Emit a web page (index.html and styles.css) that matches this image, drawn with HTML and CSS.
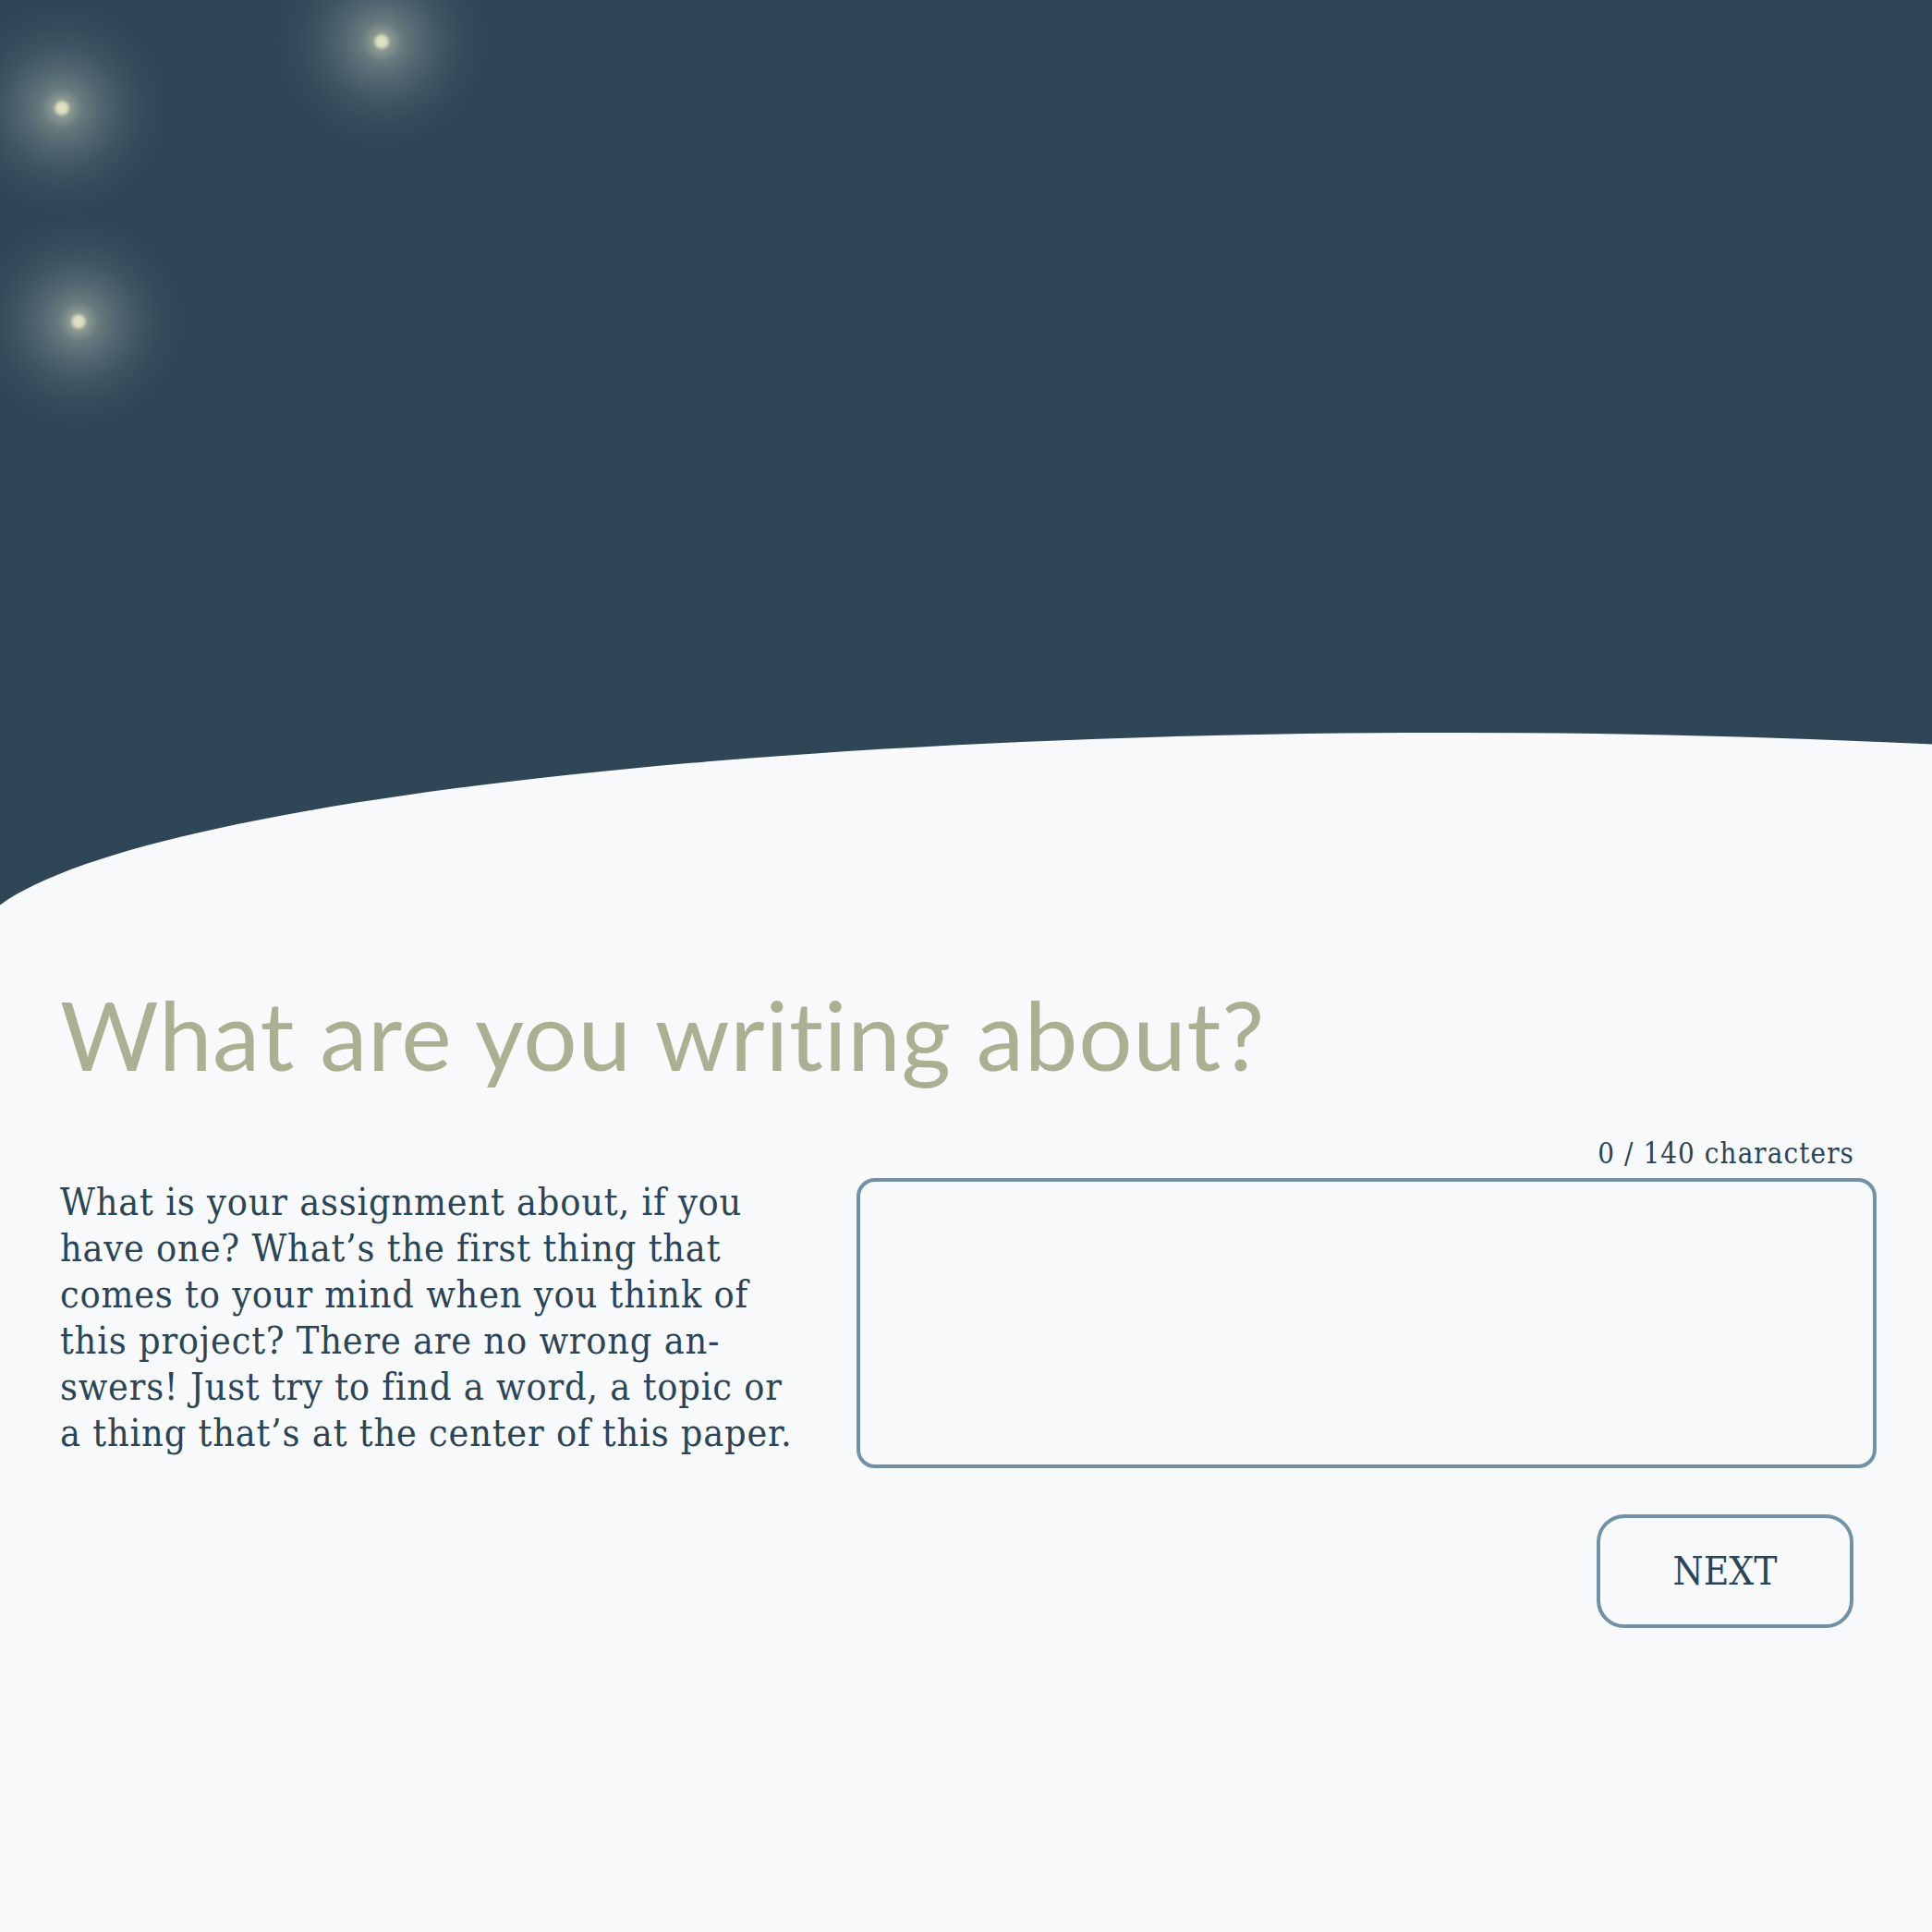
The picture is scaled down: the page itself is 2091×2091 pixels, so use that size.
FILE: index.html
```html
<!DOCTYPE html>
<html lang="en">
<head>
<meta charset="utf-8">
<title>What are you writing about?</title>
<link rel="stylesheet" href="styles.css">
</head>
<body>
<header class="hero">
  <svg class="hero-curve" viewBox="0 0 2091 1024" preserveAspectRatio="none" aria-hidden="true">
    <ellipse cx="1570" cy="1024" rx="1600" ry="231" fill="#f8f9fa"/>
  </svg>
  <span class="star star-a"></span>
  <span class="star star-b"></span>
  <span class="star star-c"></span>
</header>
<main class="content">
  <h1 class="title">What are you writing about?</h1>
  <section class="question">
    <p class="prompt">What is your assignment about, if you have one? What’s the first thing that comes to your mind when you think of this project? There are no wrong an&shy;swers! Just try to find a word, a topic or a thing that’s at the center of this paper.</p>
    <div class="answer">
      <div class="counter">0 / 140 characters</div>
      <textarea class="field" aria-label="Your answer"></textarea>
      <div class="actions">
        <button class="next" type="button">NEXT</button>
      </div>
    </div>
  </section>
</main>
</body>
</html>
```
FILE: styles.css
```css
html, body {
  margin: 0;
  padding: 0;
}
body {
  background: #f8f9fa;
  color: #2c4556;
  font-family: "DejaVu Serif Condensed", "DejaVu Serif", serif;
  font-stretch: condensed;
}
.hero {
  position: relative;
  height: 1024px;
  background: #2f4657;
  overflow: hidden;
}
.hero-curve {
  position: absolute;
  left: 0;
  top: 0;
  width: 100%;
  height: 100%;
  display: block;
}
.star {
  position: absolute;
  width: 240px;
  height: 240px;
  transform: translate(-50%, -50%);
  border-radius: 50%;
  background: radial-gradient(circle closest-side,
    #e0e2c4 0,
    #d9dcbd 5px,
    rgba(195, 202, 182, 0.62) 10px,
    rgba(175, 188, 176, 0.44) 22px,
    rgba(160, 176, 170, 0.3) 42px,
    rgba(145, 165, 165, 0.16) 66px,
    rgba(140, 160, 160, 0.05) 90px,
    rgba(140, 160, 160, 0) 115px);
}
.star-a { left: 67px; top: 117px; }
.star-b { left: 413px; top: 45px; }
.star-c { left: 85px; top: 348px; }

.content {
  padding: 0 60px 120px 65px;
}
.title {
  margin: 34px 0 0;
  font-family: Lato, "Open Sans", sans-serif;
  font-weight: 400;
  font-size: 103px;
  line-height: 1.2;
  letter-spacing: 0.75px;
  font-variant-ligatures: none;
  color: #aab192;
}
.question {
  display: grid;
  grid-template-columns: 800px 1fr;
  column-gap: 62px;
  align-items: start;
  margin-top: 48px;
}
.prompt {
  margin: 46px 0 0;
  font-size: 41px;
  line-height: 50px;
  letter-spacing: 0.8px;
}
.counter {
  font-size: 31px;
  line-height: 36px;
  letter-spacing: 1.1px;
  text-align: right;
  padding-right: 24px;
  margin-bottom: 9px;
}
.field {
  display: block;
  box-sizing: border-box;
  width: 100%;
  height: 314px;
  border: 4px solid #7291a6;
  border-radius: 20px;
  background: transparent;
  resize: none;
  margin: 0;
  padding: 16px 20px;
  font: inherit;
  font-size: 36px;
  color: inherit;
}
.actions {
  display: flex;
  justify-content: flex-end;
  padding-right: 25px;
  margin-top: 50px;
}
.next {
  box-sizing: border-box;
  width: 278px;
  height: 123px;
  border: 4px solid #7291a6;
  border-radius: 30px;
  background: transparent;
  color: #2c4556;
  font-family: "DejaVu Serif Condensed", "DejaVu Serif", serif;
  font-stretch: condensed;
  font-size: 42px;
  cursor: pointer;
}
```
